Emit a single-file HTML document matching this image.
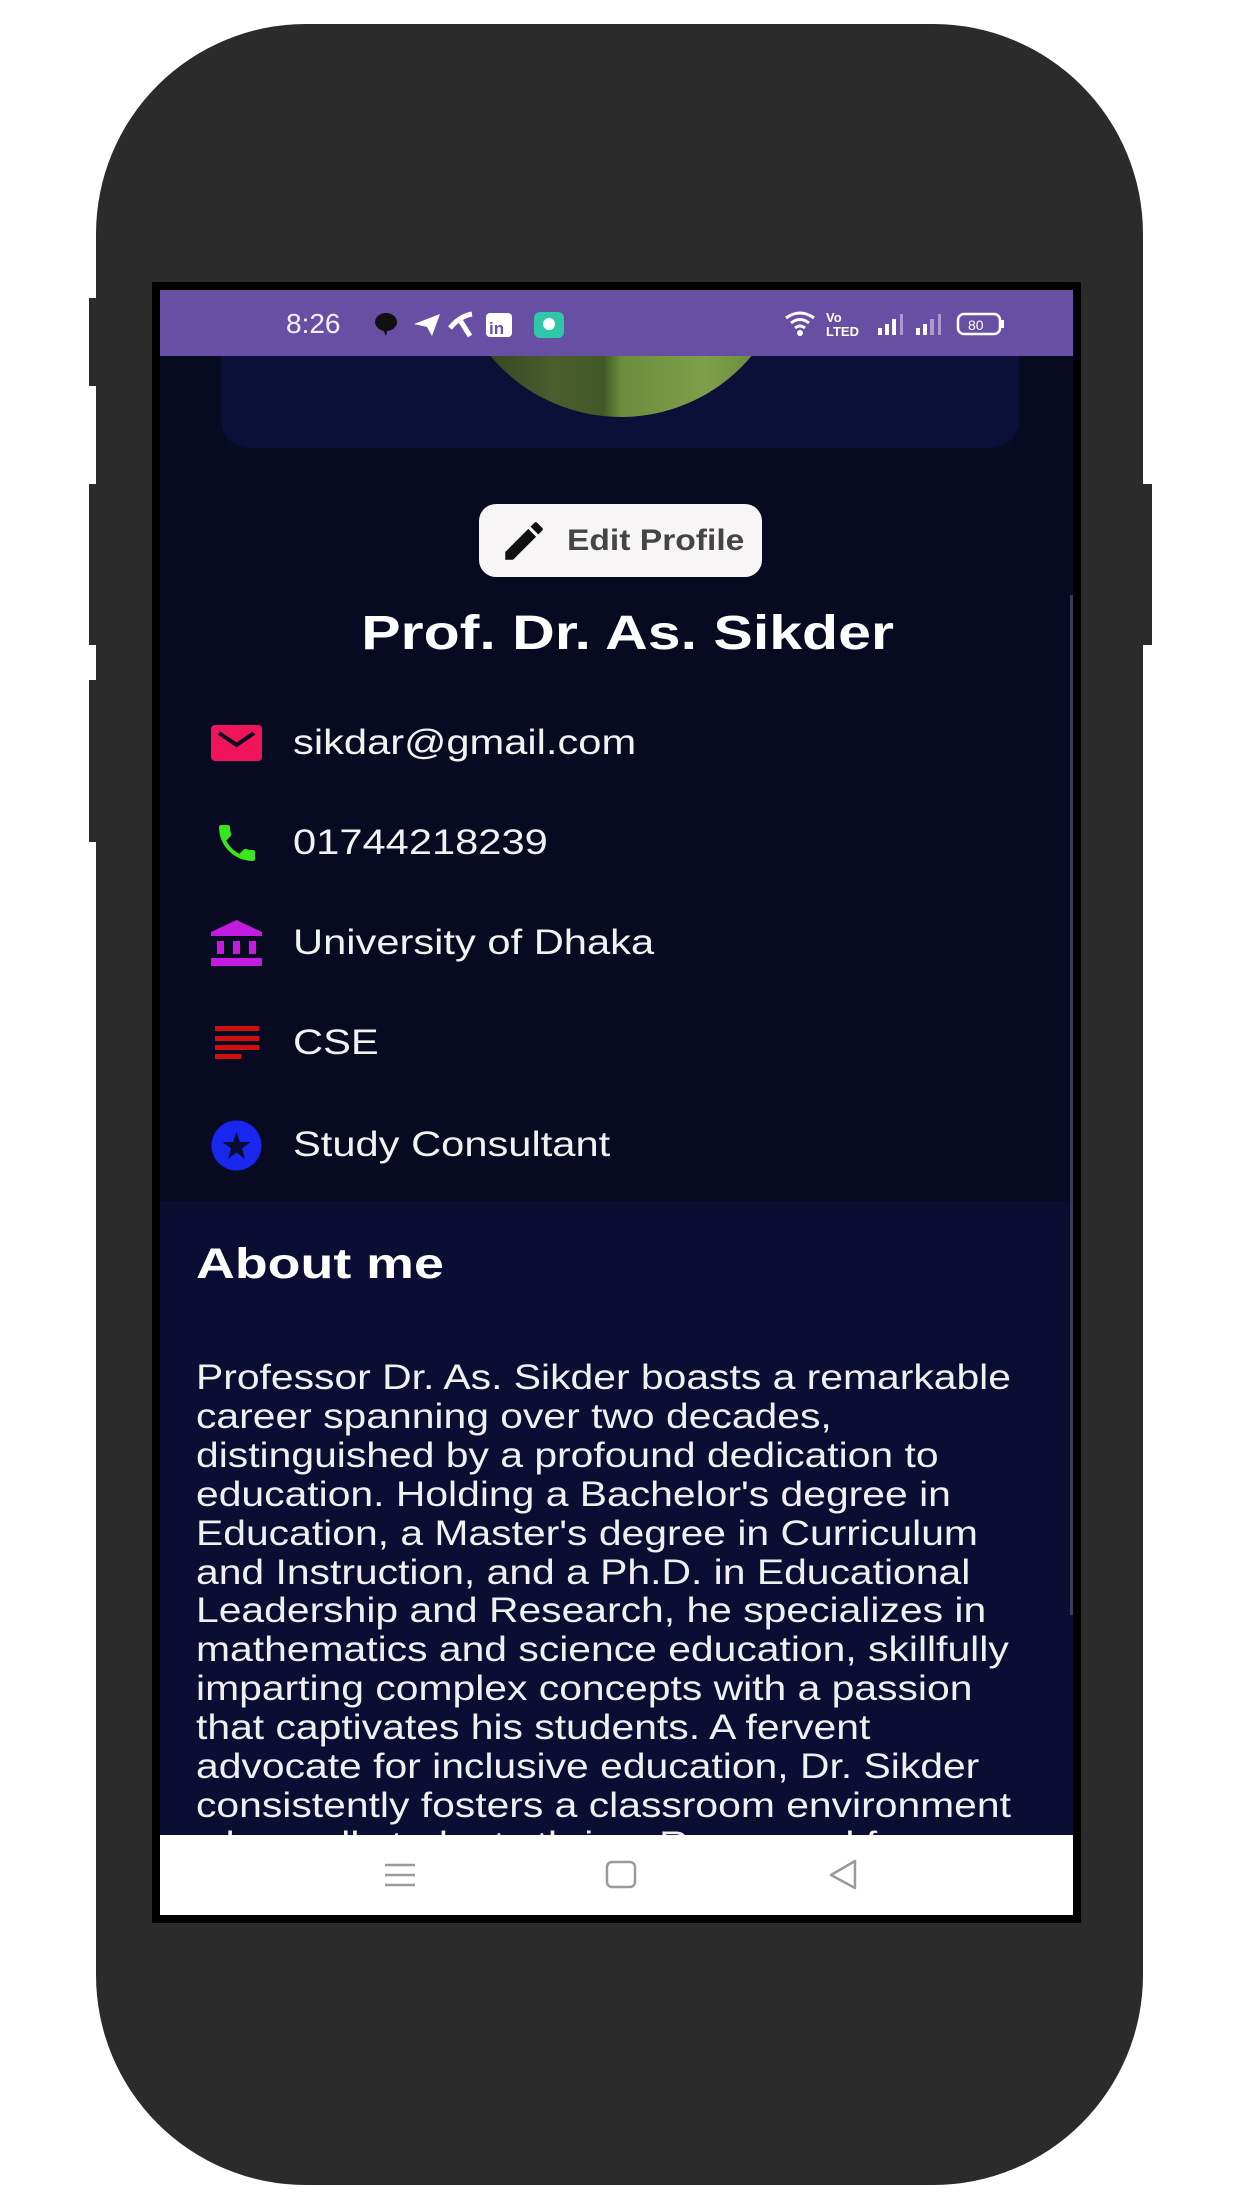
<!DOCTYPE html>
<html><head><meta charset="utf-8">
<style>
*{margin:0;padding:0;box-sizing:border-box}
html,body{width:1242px;height:2208px;background:#fff;overflow:hidden;font-family:"Liberation Sans",Arial,sans-serif}
.phone{position:absolute;left:96px;top:24px;width:1047px;height:2161px;background:#2b2b2b;border-radius:210px}
.btn{position:absolute;background:#2b2b2b}
.bezel{position:absolute;left:152px;top:282px;width:929px;height:1641px;background:#000}
.screen{position:absolute;left:160px;top:290px;width:913px;height:1625px;background:#080a22;overflow:hidden}
.status{position:absolute;left:0;top:0;width:913px;height:66px;background:#6750a4;color:#fff}
.card{position:absolute;left:61px;top:-40px;width:798px;height:198px;background:#0c1038;border-radius:0 0 28px 28px}
.avatar{position:absolute;left:291px;top:-128px;width:340px;height:255px;border-radius:0 0 170px 170px;overflow:hidden;
background:linear-gradient(90deg,#2c3a1e 0%,#4a5d2c 30%,#3f5a26 45%,#6b8c3c 50%,#7ea04a 75%,#5f7d36 100%)}
.edit{position:absolute;left:319px;top:214px;width:283px;height:73px;background:#f7f5f5;border-radius:17px;display:flex;align-items:center}
.edit span{font-weight:bold;font-size:30px;color:#454545;margin-left:18px;display:inline-block;transform:scaleX(1.12);transform-origin:left center}
.name{position:absolute;left:11px;width:913px;top:316px;text-align:center;color:#fff;font-weight:bold;font-size:48px;transform:scaleX(1.23);transform-origin:456px 0}
.row{position:absolute;left:51px;height:60px;display:flex;align-items:center;color:#f2f2f2;font-size:35px}
.row .ic{width:51px;height:51px;display:flex;align-items:center;justify-content:center;margin-right:31px}
.row .t{display:inline-block;transform:scaleX(1.19);transform-origin:left center}
.about{position:absolute;left:0;top:911px;width:913px;height:720px;background:#0b0d33}
.about h2{position:absolute;left:36px;top:39px;font-size:43px;color:#fff;font-weight:bold;transform:scaleX(1.25);transform-origin:left top}
.para{position:absolute;left:36px;top:158px;color:#f0f0f0;font-size:35px;line-height:38.9px;white-space:pre;transform:scaleX(1.167);transform-origin:left top}
.scroll{position:absolute;left:910px;top:305px;width:3px;height:1020px;background:#3a3d55}
.nav{position:absolute;left:0;top:1545px;width:913px;height:80px;background:#fff}
</style></head><body>
<div class="phone"></div>
<div class="btn" style="left:89px;top:298px;width:12px;height:88px"></div>
<div class="btn" style="left:89px;top:484px;width:12px;height:161px"></div>
<div class="btn" style="left:89px;top:680px;width:12px;height:162px"></div>
<div class="btn" style="left:1140px;top:484px;width:12px;height:161px"></div>
<div class="bezel"></div>
<div class="screen">
  <div class="card"></div>
  <div class="avatar"></div>
  <div class="status">
    <div style="position:absolute;left:126px;top:18px;font-size:28px;color:#f3f0fa">8:26</div>
    <svg style="position:absolute;left:212px;top:20px" width="230" height="30" viewBox="0 0 230 30">
      <ellipse cx="14" cy="12" rx="11" ry="9" fill="#111"/><path d="M10 18 L14 26 L16 18Z" fill="#111"/>
      <path d="M42 14 L68 4 L60 26 L55 17 Z" fill="#fff"/>
      <path d="M78 18 Q88 6 100 4 M88 10 L98 26" stroke="#fff" stroke-width="5" fill="none"/>
      <rect x="114" y="3" width="26" height="24" rx="4" fill="#fff"/><text x="117" y="24" font-size="17" font-weight="bold" fill="#6750a4" font-family="Liberation Sans">in</text>
      <rect x="162" y="2" width="30" height="26" rx="6" fill="#2fc6a9"/><circle cx="177" cy="14" r="6" fill="#fff"/>
    </svg>
    <svg style="position:absolute;left:622px;top:18px" width="260" height="32" viewBox="0 0 260 32">
      <path d="M4 10 Q18 0 32 10 M9 15 Q18 8 27 15 M13 20 Q18 16 23 20" stroke="#fff" stroke-width="3" fill="none"/><circle cx="18" cy="25" r="3" fill="#fff"/>
      <text x="44" y="14" font-size="13" font-weight="bold" fill="#fff" font-family="Liberation Sans">Vo</text>
      <text x="44" y="28" font-size="13" font-weight="bold" fill="#fff" font-family="Liberation Sans">LTED</text>
      <rect x="96" y="20" width="4" height="7" fill="#fff"/><rect x="103" y="16" width="4" height="11" fill="#fff"/><rect x="110" y="11" width="4" height="16" fill="#fff"/><rect x="118" y="6" width="3" height="21" fill="#a99bd0"/>
      <rect x="134" y="20" width="4" height="7" fill="#fff"/><rect x="141" y="16" width="4" height="11" fill="#fff"/><rect x="148" y="11" width="4" height="16" fill="#a99bd0"/><rect x="156" y="6" width="3" height="21" fill="#a99bd0"/>
      <rect x="176" y="6" width="42" height="20" rx="6" stroke="#fff" stroke-width="2.5" fill="none"/><rect x="219" y="12" width="3" height="8" fill="#fff"/>
      <text x="186" y="22" font-size="14" fill="#fff" font-family="Liberation Sans">80</text>
    </svg>
  </div>
  <div class="edit">
    <svg style="margin-left:20px" width="50" height="50" viewBox="0 0 24 24"><path d="M3 17.25V21h3.75L17.81 9.94l-3.75-3.75L3 17.25zM20.71 7.04a1 1 0 000-1.41l-2.34-2.34a1 1 0 00-1.41 0l-1.830 1.83 3.75 3.75 1.83-1.83z" fill="#111"/></svg>
    <span>Edit Profile</span>
  </div>
  <div class="name">Prof. Dr. As. Sikder</div>
  <div class="row" style="top:423px"><div class="ic"><svg width="51" height="40" viewBox="0 0 51 40"><rect x="0" y="2" width="51" height="36" rx="4" fill="#f0145a"/><path d="M8 10 L25.5 22 L43 10" stroke="#0a0b22" stroke-width="4" fill="none"/></svg></div><span class="t">sikdar@gmail.com</span></div>
  <div class="row" style="top:523px"><div class="ic"><svg width="48" height="48" viewBox="0 0 24 24"><path d="M6.62 10.79c1.44 2.83 3.76 5.14 6.59 6.59l2.2-2.2c.27-.27.67-.36 1.02-.24 1.12.37 2.33.57 3.57.57.55 0 1 .45 1 1V20c0 .55-.45 1-1 1-9.39 0-17-7.61-17-17 0-.55.45-1 1-1h3.5c.55 0 1 .45 1 1 0 1.25.2 2.45.57 3.57.11.35.03.74-.25 1.02l-2.2 2.2z" fill="#39e51c"/></svg></div><span class="t">01744218239</span></div>
  <div class="row" style="top:623px"><div class="ic"><svg width="51" height="46" viewBox="0 0 51 46"><path d="M25.5 0 L51 12 L51 16 L0 16 L0 12Z" fill="#c31ce0"/><rect x="6" y="21" width="7" height="13" fill="#c31ce0"/><rect x="22" y="21" width="7" height="13" fill="#c31ce0"/><rect x="38" y="21" width="7" height="13" fill="#c31ce0"/><rect x="0" y="38" width="51" height="8" fill="#c31ce0"/></svg></div><span class="t">University of Dhaka</span></div>
  <div class="row" style="top:723px"><div class="ic"><svg width="44" height="34" viewBox="0 0 44 34"><rect x="0" y="0" width="44" height="5" fill="#d01010"/><rect x="0" y="10" width="44" height="5" fill="#d01010"/><rect x="0" y="19" width="44" height="5" fill="#d01010"/><rect x="0" y="28" width="26" height="5" fill="#d01010"/></svg></div><span class="t">CSE</span></div>
  <div class="row" style="top:825px"><div class="ic"><svg width="51" height="51" viewBox="0 0 51 51"><circle cx="25.5" cy="25.5" r="25" fill="#1826f0"/><path d="M25.5 12 L29 22 L39.5 22 L31 28.5 L34 39 L25.5 32.5 L17 39 L20 28.5 L11.5 22 L22 22Z" fill="#0a0b30"/></svg></div><span class="t">Study Consultant</span></div>
  <div class="about">
    <h2>About me</h2>
    <div class="para">Professor Dr. As. Sikder boasts a remarkable
career spanning over two decades,
distinguished by a profound dedication to
education. Holding a Bachelor's degree in
Education, a Master's degree in Curriculum
and Instruction, and a Ph.D. in Educational
Leadership and Research, he specializes in
mathematics and science education, skillfully
imparting complex concepts with a passion
that captivates his students. A fervent
advocate for inclusive education, Dr. Sikder
consistently fosters a classroom environment
where all students thrive. Renowned for</div>
  </div>
  <div class="scroll"></div>
  <div class="nav">
    <svg style="position:absolute;left:222px;top:22px" width="36" height="36" viewBox="0 0 36 36"><path d="M3 8H33M3 18H33M3 28H33" stroke="#9a9a9a" stroke-width="2.5"/></svg>
    <svg style="position:absolute;left:443px;top:22px" width="36" height="36" viewBox="0 0 36 36"><rect x="4" y="5" width="28" height="25" rx="5" stroke="#9a9a9a" stroke-width="2.5" fill="none"/></svg>
    <svg style="position:absolute;left:665px;top:22px" width="36" height="36" viewBox="0 0 36 36"><path d="M30 4 L6 18 L30 31Z" stroke="#9a9a9a" stroke-width="2.5" fill="none" stroke-linejoin="round"/></svg>
  </div>
</div>
</body></html>
